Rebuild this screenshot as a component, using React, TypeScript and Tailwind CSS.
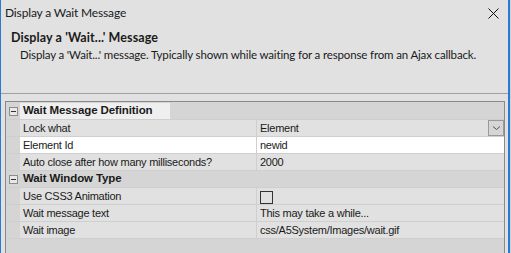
import { ReactNode } from "react";

type Prop = { label: string; value?: ReactNode; white?: boolean; dropdown?: boolean };

const groups: { title: string; selected?: boolean; props: Prop[] }[] = [
  {
    title: "Wait Message Definition",
    selected: true,
    props: [
      { label: "Lock what", value: "Element", dropdown: true },
      { label: "Element Id", value: "newid", white: true },
      { label: "Auto close after how many milliseconds?", value: "2000" },
    ],
  },
  {
    title: "Wait Window Type",
    props: [
      { label: "Use CSS3 Animation", value: <span className="mt-[2px] block h-[13px] w-[13px] border border-[#333333]" /> },
      { label: "Wait message text", value: "This may take a while..." },
      { label: "Wait image", value: "css/A5System/Images/wait.gif" },
    ],
  },
];

function MinusBox() {
  return (
    <span className="flex h-[9px] w-[9px] items-center justify-center border border-[#8c8c8c] bg-[#e8e8e8]">
      <span className="h-px w-[5px] bg-[#333333]" />
    </span>
  );
}

function Row({ p }: { p: Prop }) {
  return (
    <div className="flex h-[17px] border-b border-[#cfcfcf]">
      <div className="w-[14px] shrink-0 bg-[#d5d5d5]" />
      <div className={`flex w-[237px] shrink-0 items-center border-r border-[#cfcfcf] pl-[3px] ${p.white ? "bg-white" : "bg-[#e1e1e1]"}`}>
        {p.label}
      </div>
      <div className={`relative flex flex-1 items-center pl-[3px] ${p.white ? "bg-white" : "bg-[#e1e1e1]"}`}>
        {p.value}
        {p.dropdown && (
          <span className="absolute right-0 top-0 flex h-[16px] w-[16px] items-center justify-center border border-[#9a9a9a] bg-[#d6d6d6]">
            <svg width="9" height="6" viewBox="0 0 9 6">
              <path d="M1 1.5 L4.5 4.5 L8 1.5" fill="none" stroke="#555" strokeWidth="1" />
            </svg>
          </span>
        )}
      </div>
    </div>
  );
}

export default function App() {
  return (
    <div className="flex h-[253px] w-[511px] overflow-hidden bg-[#d0d0d0] font-['Lato',sans-serif] text-[#1a1a1a]">
      <div className="flex w-[510px] flex-col border-l border-r-2 border-[#2b79d0] bg-[#e1e1e1]">
        <div className="flex h-[26px] shrink-0 items-center justify-between pl-[4px] pr-[9px] text-[12px] tracking-[-0.15px]">
          <span>Display a Wait Message</span>
          <svg width="11" height="11" viewBox="0 0 11 11">
            <path d="M0.5 0.5 L10.5 10.5 M10.5 0.5 L0.5 10.5" stroke="#111" strokeWidth="1" />
          </svg>
        </div>
        <div className="h-[68px] shrink-0 border-b border-[#a0a0a0] pl-[10px] pt-[3px]">
          <div className="text-[12.5px] font-bold leading-[17px] tracking-[0.1px]">Display a 'Wait...' Message</div>
          <div className="whitespace-nowrap pl-[9px] text-[11.5px] leading-[17px] tracking-[-0.15px]">
            Display a 'Wait...' message. Typically shown while waiting for a response from an Ajax callback.
          </div>
        </div>
        <div className="ml-[4px] mr-[3px] mt-[7px] flex-1 border-l border-r border-t border-[#8a8a8a] bg-[#d5d5d5] pt-px font-['Liberation_Sans',sans-serif] text-[11px] tracking-[-0.25px]">
          {groups.map((g) => (
            <div key={g.title}>
              <div className="flex h-[17px] border-b border-[#cfcfcf] bg-[#d5d5d5]">
                <div className="flex w-[14px] shrink-0 items-center justify-center">
                  <MinusBox />
                </div>
                <div className={`flex items-center whitespace-nowrap pl-[3px] pr-[8px] text-[11.5px] font-bold tracking-[-0.1px] ${g.selected ? "w-[150px] bg-[#efefef]" : ""}`}>
                  {g.title}
                </div>
              </div>
              {g.props.map((p) => (
                <Row key={p.label} p={p} />
              ))}
            </div>
          ))}
        </div>
      </div>
    </div>
  );
}
